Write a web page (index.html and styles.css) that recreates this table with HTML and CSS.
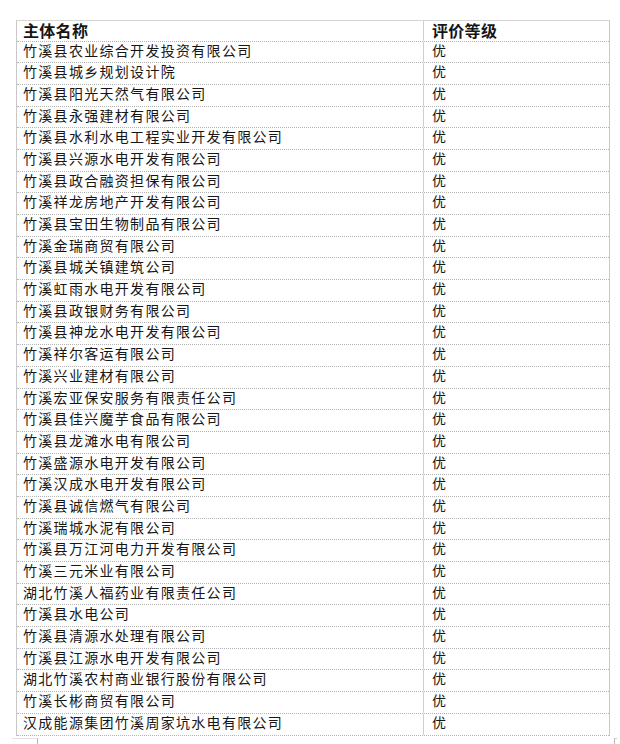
FILE: index.html
```html
<!DOCTYPE html>
<html lang="zh-CN">
<head>
<meta charset="utf-8">
<title>评价等级</title>
<link rel="stylesheet" href="styles.css">
</head>
<body>
<div class="sheet">
  <div class="row head"><div class="c1">主体名称</div><div class="c2">评价等级</div></div>
  <div class="row"><div class="c1">竹溪县农业综合开发投资有限公司</div><div class="c2">优</div></div>
  <div class="row"><div class="c1">竹溪县城乡规划设计院</div><div class="c2">优</div></div>
  <div class="row"><div class="c1">竹溪县阳光天然气有限公司</div><div class="c2">优</div></div>
  <div class="row"><div class="c1">竹溪县永强建材有限公司</div><div class="c2">优</div></div>
  <div class="row"><div class="c1">竹溪县水利水电工程实业开发有限公司</div><div class="c2">优</div></div>
  <div class="row"><div class="c1">竹溪县兴源水电开发有限公司</div><div class="c2">优</div></div>
  <div class="row"><div class="c1">竹溪县政合融资担保有限公司</div><div class="c2">优</div></div>
  <div class="row"><div class="c1">竹溪祥龙房地产开发有限公司</div><div class="c2">优</div></div>
  <div class="row"><div class="c1">竹溪县宝田生物制品有限公司</div><div class="c2">优</div></div>
  <div class="row"><div class="c1">竹溪金瑞商贸有限公司</div><div class="c2">优</div></div>
  <div class="row"><div class="c1">竹溪县城关镇建筑公司</div><div class="c2">优</div></div>
  <div class="row"><div class="c1">竹溪虹雨水电开发有限公司</div><div class="c2">优</div></div>
  <div class="row"><div class="c1">竹溪县政银财务有限公司</div><div class="c2">优</div></div>
  <div class="row"><div class="c1">竹溪县神龙水电开发有限公司</div><div class="c2">优</div></div>
  <div class="row"><div class="c1">竹溪祥尔客运有限公司</div><div class="c2">优</div></div>
  <div class="row"><div class="c1">竹溪兴业建材有限公司</div><div class="c2">优</div></div>
  <div class="row"><div class="c1">竹溪宏亚保安服务有限责任公司</div><div class="c2">优</div></div>
  <div class="row"><div class="c1">竹溪县佳兴魔芋食品有限公司</div><div class="c2">优</div></div>
  <div class="row"><div class="c1">竹溪县龙滩水电有限公司</div><div class="c2">优</div></div>
  <div class="row"><div class="c1">竹溪盛源水电开发有限公司</div><div class="c2">优</div></div>
  <div class="row"><div class="c1">竹溪汉成水电开发有限公司</div><div class="c2">优</div></div>
  <div class="row"><div class="c1">竹溪县诚信燃气有限公司</div><div class="c2">优</div></div>
  <div class="row"><div class="c1">竹溪瑞城水泥有限公司</div><div class="c2">优</div></div>
  <div class="row"><div class="c1">竹溪县万江河电力开发有限公司</div><div class="c2">优</div></div>
  <div class="row"><div class="c1">竹溪三元米业有限公司</div><div class="c2">优</div></div>
  <div class="row"><div class="c1">湖北竹溪人福药业有限责任公司</div><div class="c2">优</div></div>
  <div class="row"><div class="c1">竹溪县水电公司</div><div class="c2">优</div></div>
  <div class="row"><div class="c1">竹溪县清源水处理有限公司</div><div class="c2">优</div></div>
  <div class="row"><div class="c1">竹溪县江源水电开发有限公司</div><div class="c2">优</div></div>
  <div class="row"><div class="c1">湖北竹溪农村商业银行股份有限公司</div><div class="c2">优</div></div>
  <div class="row"><div class="c1">竹溪长彬商贸有限公司</div><div class="c2">优</div></div>
  <div class="row"><div class="c1">汉成能源集团竹溪周家坑水电有限公司</div><div class="c2">优</div></div>
</div>
<div class="next"><span class="next-left"></span><span class="next-right"></span></div>
</body>
</html>
```
FILE: styles.css
```css
html, body {
  margin: 0;
  padding: 0;
  background: #ffffff;
}
body {
  font-family: "Noto Sans CJK SC", "Noto Sans", sans-serif;
  color: #161616;
}
.sheet {
  margin: 19.5px 0 0 16px;
  width: 594px;
  border-top: 1px solid #d6d6d6;
  border-left: 1px solid #c8c8c8;
  border-right: 1px solid #c8c8c8;
  box-sizing: border-box;
}
.row {
  display: grid;
  grid-template-columns: 406px 1fr;
  height: 21.7px;
  box-sizing: border-box;
  border-bottom: 1px dotted #b4b4b4;
  font-size: 14px;
  line-height: 16px;
  letter-spacing: 1.3px;
}
.row.head {
  height: 21px;
  font-size: 16px;
  line-height: 18px;
  font-weight: bold;
  letter-spacing: 0.3px;
}
.c1 {
  padding-left: 6px;
  white-space: nowrap;
}
.c2 {
  padding-left: 8px;
  border-left: 1px solid #cfcfcf;
  white-space: nowrap;
}
.next {
  display: flex;
  justify-content: space-between;
  margin: 2px 3px 0 12px;
  height: 6px;
}
.next-left {
  width: 25px;
  border-top: 1px solid #e2e2e2;
  border-right: 1px solid #b8b8b8;
}
.next-right {
  width: 2px;
  border-top: 1px solid #cccccc;
  border-left: 1px solid #b8b8b8;
}
```
